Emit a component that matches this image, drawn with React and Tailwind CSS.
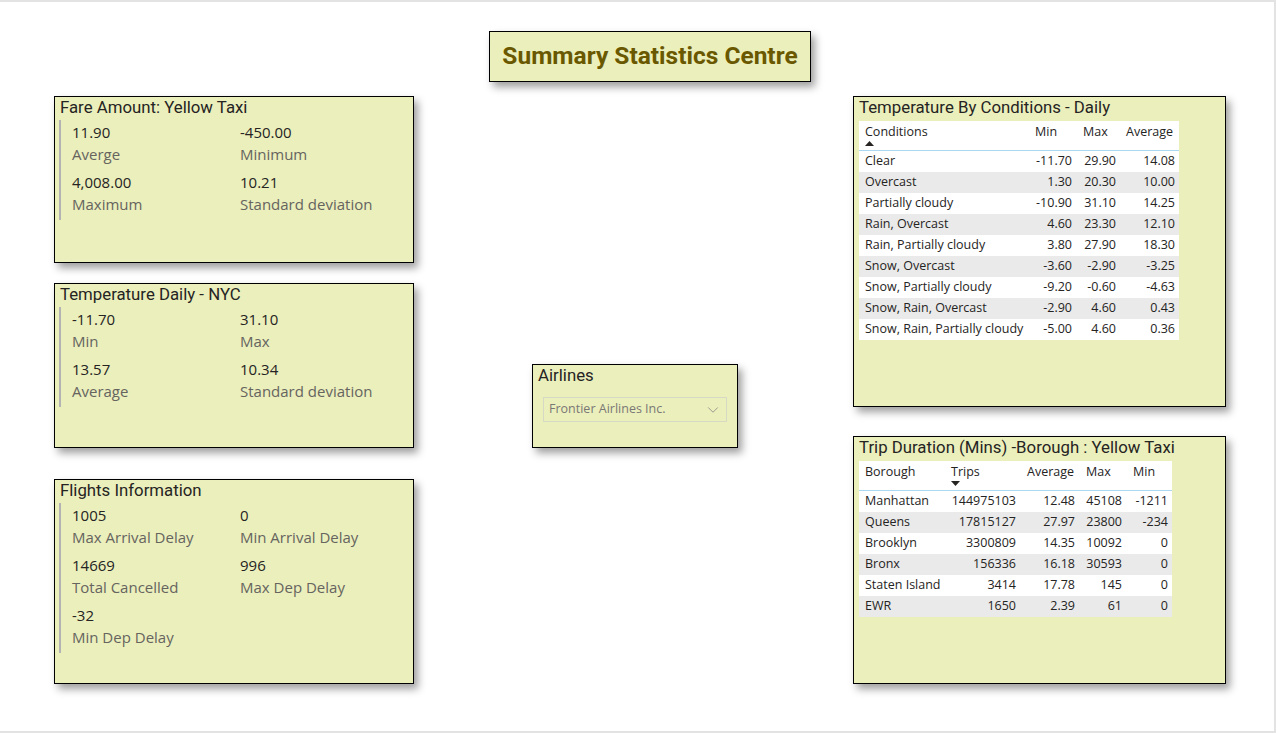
import React from 'react';
import { ChevronDown } from 'lucide-react';

const sans = { fontFamily: '"Open Sans", "Noto Sans", sans-serif' };
const din = { fontFamily: 'Roboto, "Noto Sans", sans-serif' };

const fareStats = [
  { value: '11.90', label: 'Averge' },
  { value: '-450.00', label: 'Minimum' },
  { value: '4,008.00', label: 'Maximum' },
  { value: '10.21', label: 'Standard deviation' },
];

const tempStats = [
  { value: '-11.70', label: 'Min' },
  { value: '31.10', label: 'Max' },
  { value: '13.57', label: 'Average' },
  { value: '10.34', label: 'Standard deviation' },
];

const flightStats = [
  { value: '1005', label: 'Max Arrival Delay' },
  { value: '0', label: 'Min Arrival Delay' },
  { value: '14669', label: 'Total Cancelled' },
  { value: '996', label: 'Max Dep Delay' },
  { value: '-32', label: 'Min Dep Delay' },
];

const conditions = [
  ['Clear', '-11.70', '29.90', '14.08'],
  ['Overcast', '1.30', '20.30', '10.00'],
  ['Partially cloudy', '-10.90', '31.10', '14.25'],
  ['Rain, Overcast', '4.60', '23.30', '12.10'],
  ['Rain, Partially cloudy', '3.80', '27.90', '18.30'],
  ['Snow, Overcast', '-3.60', '-2.90', '-3.25'],
  ['Snow, Partially cloudy', '-9.20', '-0.60', '-4.63'],
  ['Snow, Rain, Overcast', '-2.90', '4.60', '0.43'],
  ['Snow, Rain, Partially cloudy', '-5.00', '4.60', '0.36'],
];

const boroughs = [
  ['Manhattan', '144975103', '12.48', '45108', '-1211'],
  ['Queens', '17815127', '27.97', '23800', '-234'],
  ['Brooklyn', '3300809', '14.35', '10092', '0'],
  ['Bronx', '156336', '16.18', '30593', '0'],
  ['Staten Island', '3414', '17.78', '145', '0'],
  ['EWR', '1650', '2.39', '61', '0'],
];

const Visual = ({ className, children }) => (
  <div
    className={`border border-black bg-[#ebefbc] shadow-[4px_5px_8px_rgba(0,0,0,0.38)] ${className}`}
  >
    {children}
  </div>
);

const VisualTitle = ({ children }) => (
  <div className="pl-[5px] text-[16.8px] leading-[20px] text-[#252423]" style={din}>
    {children}
  </div>
);

const MultiRowCard = ({ title, stats, className }) => (
  <Visual className={className}>
    <VisualTitle>{title}</VisualTitle>
    <div className="ml-[4px] mt-[3px] border-l-2 border-[#b3b3b3] pl-[11px]" style={sans}>
      <div className="grid grid-cols-[168px_1fr]">
        {stats.map((s) => (
          <div key={s.label} className="h-[50px] pt-[1px]">
            <div className="text-[15px] leading-[22px] text-[#252423]">{s.value}</div>
            <div className="text-[15px] leading-[22px] text-[#66645f]">{s.label}</div>
          </div>
        ))}
      </div>
    </div>
  </Visual>
);

const SortUp = () => (
  <svg width="9" height="5" viewBox="0 0 9 5" className="mt-[1px]">
    <path d="M0 5 L4.5 0 L9 5 Z" fill="#252423" />
  </svg>
);

const SortDown = () => (
  <svg width="9" height="5" viewBox="0 0 9 5" className="mt-[1px]">
    <path d="M0 0 L9 0 L4.5 5 Z" fill="#252423" />
  </svg>
);

const ConditionsTable = () => (
  <div className="ml-[5px] mt-[4px] w-[320px] bg-white text-[12.5px] text-[#252423]" style={sans}>
    <div className="grid h-[30px] grid-cols-[170px_48px_43px_59px] border-b border-[#a9d8f0] pt-[3px]">
      <div className="pl-[6px] leading-[16px]">
        Conditions
        <SortUp />
      </div>
      <div className="pl-[6px] leading-[16px]">Min</div>
      <div className="pl-[6px] leading-[16px]">Max</div>
      <div className="pl-[6px] leading-[16px]">Average</div>
    </div>
    {conditions.map((r, i) => (
      <div
        key={r[0]}
        className={`grid h-[21px] grid-cols-[170px_48px_43px_59px] items-center ${i % 2 ? 'bg-[#eaeaea]' : 'bg-white'}`}
      >
        <div className="pl-[6px]">{r[0]}</div>
        <div className="pr-[5px] text-right">{r[1]}</div>
        <div className="pr-[4px] text-right">{r[2]}</div>
        <div className="pr-[4px] text-right">{r[3]}</div>
      </div>
    ))}
  </div>
);

const BoroughTable = () => (
  <div className="ml-[5px] mt-[4px] w-[313px] bg-white text-[12.5px] text-[#252423]" style={sans}>
    <div className="grid h-[30px] grid-cols-[86px_76px_59px_47px_45px] border-b border-[#a9d8f0] pt-[3px]">
      <div className="pl-[6px] leading-[16px]">Borough</div>
      <div className="pl-[6px] leading-[16px]">
        Trips
        <SortDown />
      </div>
      <div className="pl-[6px] leading-[16px]">Average</div>
      <div className="pl-[6px] leading-[16px]">Max</div>
      <div className="pl-[6px] leading-[16px]">Min</div>
    </div>
    {boroughs.map((r, i) => (
      <div
        key={r[0]}
        className={`grid h-[21px] grid-cols-[86px_76px_59px_47px_45px] items-center ${i % 2 ? 'bg-[#eaeaea]' : 'bg-white'}`}
      >
        <div className="pl-[6px]">{r[0]}</div>
        <div className="pr-[5px] text-right">{r[1]}</div>
        <div className="pr-[5px] text-right">{r[2]}</div>
        <div className="pr-[5px] text-right">{r[3]}</div>
        <div className="pr-[4px] text-right">{r[4]}</div>
      </div>
    ))}
  </div>
);

export default function App() {
  return (
    <div className="box-border flex h-[733px] w-[1276px] overflow-hidden border-t-2 border-r-2 border-b-2 border-[#e3e3e3] bg-white">
      {/* Left column: stat cards */}
      <div className="ml-[54px] mt-[94px] flex w-[360px] shrink-0 flex-col">
        <MultiRowCard title="Fare Amount: Yellow Taxi" stats={fareStats} className="h-[167px]" />
        <MultiRowCard title="Temperature Daily - NYC" stats={tempStats} className="mt-[20px] h-[165px]" />
        <MultiRowCard title="Flights Information" stats={flightStats} className="mt-[31px] h-[205px]" />
      </div>

      {/* Middle column: heading + slicer */}
      <div className="flex w-[439px] shrink-0 flex-col">
        <Visual className="ml-[75px] mt-[29px] flex h-[51px] w-[322px] items-center justify-center">
          <span className="text-[24.5px] font-bold text-[#6a5800]" style={din}>
            Summary Statistics Centre
          </span>
        </Visual>
        <Visual className="ml-[118px] mt-[282px] h-[84px] w-[206px]">
          <VisualTitle>Airlines</VisualTitle>
          <div
            className="ml-[10px] mt-[12px] flex h-[25px] w-[184px] items-center justify-between border border-[#d6d9c4] pl-[5px] pr-[4px] text-[12.5px] text-[#7a7875]"
            style={sans}
          >
            <span>Frontier Airlines Inc.</span>
            <ChevronDown className="h-[18px] w-[18px] text-[#8a8886]" strokeWidth={1.1} />
          </div>
        </Visual>
      </div>

      {/* Right column: tables */}
      <div className="mt-[94px] flex w-[373px] shrink-0 flex-col">
        <Visual className="h-[311px]">
          <VisualTitle>Temperature By Conditions - Daily</VisualTitle>
          <ConditionsTable />
        </Visual>
        <Visual className="mt-[29px] h-[248px]">
          <VisualTitle>Trip Duration (Mins) -Borough : Yellow Taxi</VisualTitle>
          <BoroughTable />
        </Visual>
      </div>
    </div>
  );
}
